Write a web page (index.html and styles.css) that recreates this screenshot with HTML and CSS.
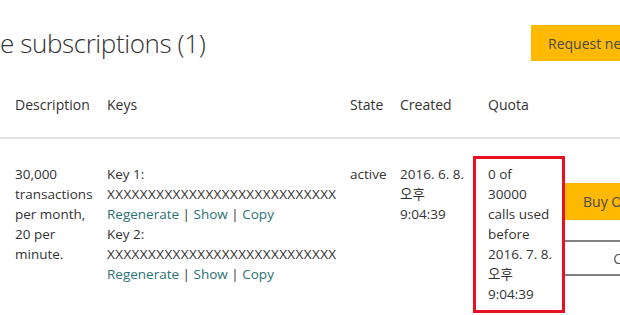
FILE: index.html
```html
<!DOCTYPE html>
<html lang="en">
<head>
    <meta charset="UTF-8">
    <meta name="viewport" content="width=device-width, initial-scale=1.0">
    <title>Subscriptions</title>
    <link rel="stylesheet" href="styles.css">
</head>
<body>

    <div class="header">
        <h2 class="title">e subscriptions (1)</h2>
        <button class="request-button">Request new</button>
    </div>

    <div class="subs-table">
        <div class="row head-row">
            <div class="cell">Description</div>
            <div class="cell">Keys</div>
            <div class="cell">State</div>
            <div class="cell">Created</div>
            <div class="cell quota-head">Quota</div>
            <div class="cell"></div>
        </div>

        <div class="row body-row">
            <div class="cell desc">30,000 transactions per month, 20 per minute.</div>
            <div class="cell keys">
                <div>Key 1:</div>
                <div class="key-value">XXXXXXXXXXXXXXXXXXXXXXXXXXXX</div>
                <div><a href="#">Regenerate</a> | <a href="#">Show</a> | <a href="#">Copy</a></div>
                <div>Key 2:</div>
                <div class="key-value">XXXXXXXXXXXXXXXXXXXXXXXXXXXX</div>
                <div><a href="#">Regenerate</a> | <a href="#">Show</a> | <a href="#">Copy</a></div>
            </div>
            <div class="cell">active</div>
            <div class="cell">2016. 6. 8.<br>오후<br>9:04:39</div>
            <div class="cell quota">0 of<br>30000<br>calls used<br>before<br>2016. 7. 8.<br>오후<br>9:04:39</div>
            <div class="cell actions">
                <button class="buy-button">Buy Overage</button>
                <button class="cancel-button">Cancel</button>
            </div>
        </div>
    </div>

</body>
</html>
```

FILE: styles.css
```css
        html, body {
            margin: 0;
            padding: 0;
            overflow: hidden;
        }

        body {
            font-family: "Open Sans", "Noto Sans CJK KR", sans-serif;
            font-size: 13.5px;
            color: #333333;
            background-color: #ffffff;
            width: 620px;
        }

        .header {
            display: flex;
            align-items: center;
            height: 36px;
            margin-top: 25px;
            white-space: nowrap;
        }

        .header .title {
            margin: 0;
            font-weight: 300;
            font-size: 26px;
            letter-spacing: -0.4px;
            color: #333333;
            line-height: 36px;
        }

        .request-button {
            flex: none;
            width: 140px;
            height: 36px;
            margin-left: auto;
            margin-right: -51px;
            padding: 0 0 0 17px;
            text-align: left;
            background-color: #ffb900;
            color: #4a4a4a;
            border: none;
            font-family: inherit;
            font-size: 14px;
        }

        .subs-table {
            margin-top: 34px;
        }

        .row {
            display: grid;
            grid-template-columns: 92px 243px 50px 73px 92px 140px;
            padding-left: 15px;
        }

        .head-row {
            height: 42px;
            border-bottom: 2px solid #e2e2e2;
        }

        .head-row .cell {
            font-size: 14px;
            line-height: 20px;
        }

        .head-row .quota-head {
            padding-left: 15px;
        }

        .body-row {
            padding-top: 17px;
        }

        .cell {
            line-height: 20px;
        }

        .body-row .cell {
            padding-top: 8px;
        }

        .body-row .desc {
            padding-right: 6px;
        }

        .keys a {
            color: #2b7173;
            text-decoration: none;
        }

        .key-value {
            white-space: nowrap;
            letter-spacing: 0.4px;
        }

        .body-row .quota {
            border: 3px solid #e81123;
            padding: 5px 8px 6px 12px;
        }

        .actions {
            display: flex;
            flex-direction: column;
            gap: 20px;
            padding-top: 27px !important;
        }

        .buy-button,
        .cancel-button {
            width: 140px;
            height: 37px;
            font-family: inherit;
            font-size: 14px;
            border: none;
            white-space: nowrap;
        }

        .buy-button {
            background-color: #ffb900;
            color: #4a4a4a;
            text-align: left;
            padding-left: 18px;
        }

        .cancel-button {
            height: 36px;
            background-color: #ffffff;
            color: #555555;
            border-top: 2px solid #808080;
            border-bottom: 2px solid #808080;
        }
```
